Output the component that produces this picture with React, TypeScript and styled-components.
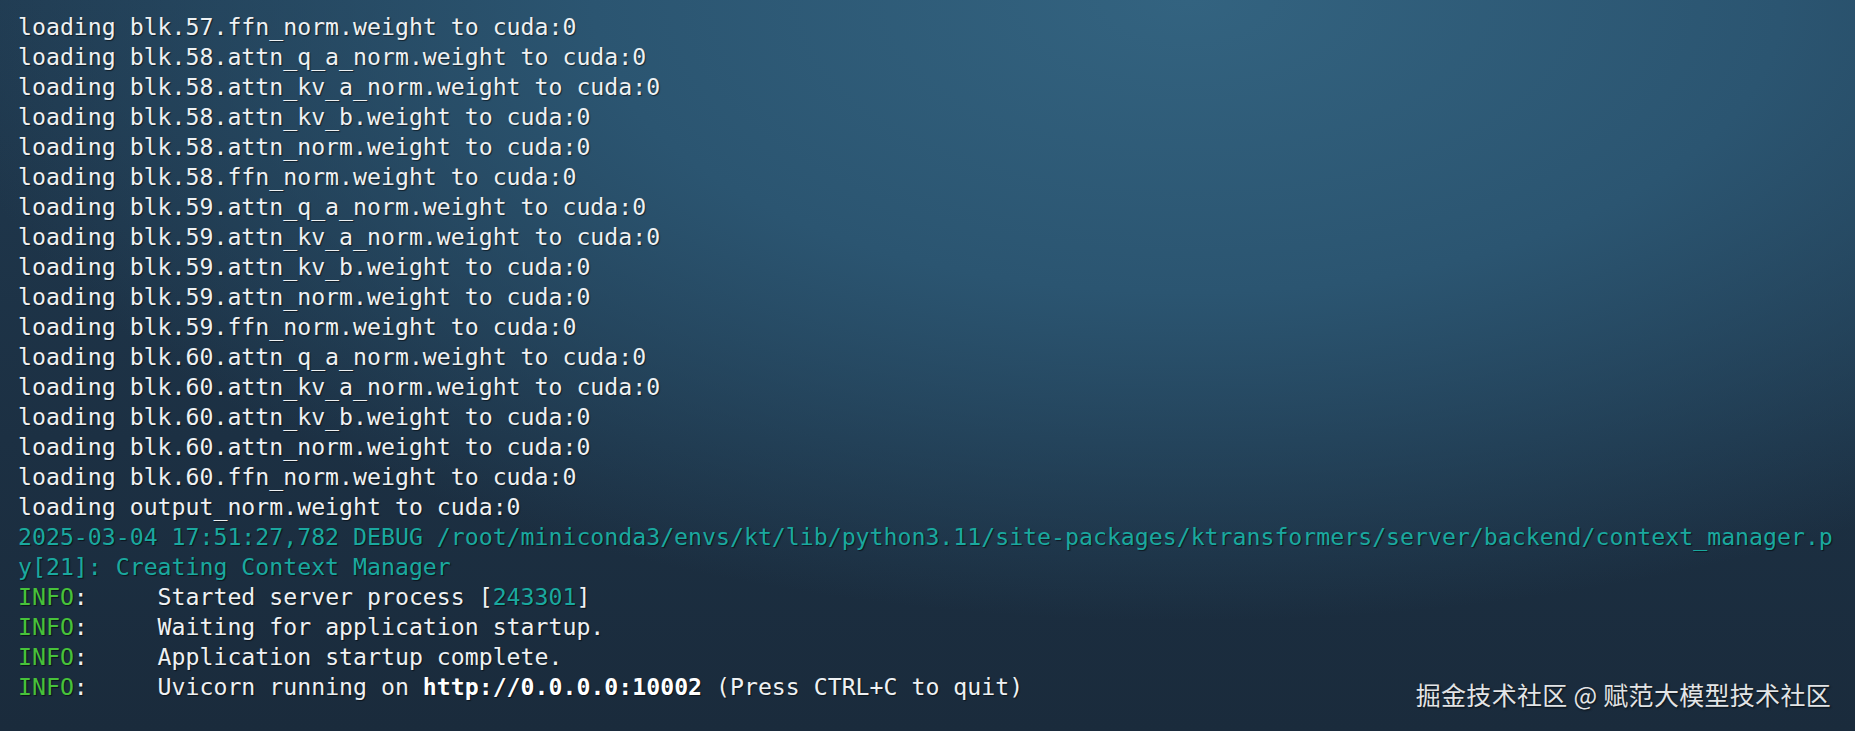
import React from "react";
import styled, { createGlobalStyle } from "styled-components";

type Tone = "plain" | "teal" | "green" | "bold";
type Segment = { text: string; tone?: Tone };

const GlobalStyle = createGlobalStyle`
	html, body {
		margin: 0;
		padding: 0;
		height: 100%;
		background: #1c2d3e;
	}
	#root {
		height: 100%;
	}
`;

const loadLines = [
	"blk.57.ffn_norm.weight",
	"blk.58.attn_q_a_norm.weight",
	"blk.58.attn_kv_a_norm.weight",
	"blk.58.attn_kv_b.weight",
	"blk.58.attn_norm.weight",
	"blk.58.ffn_norm.weight",
	"blk.59.attn_q_a_norm.weight",
	"blk.59.attn_kv_a_norm.weight",
	"blk.59.attn_kv_b.weight",
	"blk.59.attn_norm.weight",
	"blk.59.ffn_norm.weight",
	"blk.60.attn_q_a_norm.weight",
	"blk.60.attn_kv_a_norm.weight",
	"blk.60.attn_kv_b.weight",
	"blk.60.attn_norm.weight",
	"blk.60.ffn_norm.weight",
	"output_norm.weight",
];

const info = (rest: Segment[]): Segment[] => [
	{ text: "INFO", tone: "green" },
	{ text: ":     " },
	...rest,
];

const lines: Segment[][] = [
	...loadLines.map((name) => [{ text: `loading ${name} to cuda:0` }]),
	[
		{
			text: "2025-03-04 17:51:27,782 DEBUG /root/miniconda3/envs/kt/lib/python3.11/site-packages/ktransformers/server/backend/context_manager.p",
			tone: "teal",
		},
	],
	[{ text: "y[21]: Creating Context Manager", tone: "teal" }],
	info([{ text: "Started server process [" }, { text: "243301", tone: "teal" }, { text: "]" }]),
	info([{ text: "Waiting for application startup." }]),
	info([{ text: "Application startup complete." }]),
	info([
		{ text: "Uvicorn running on " },
		{ text: "http://0.0.0.0:10002", tone: "bold" },
		{ text: " (Press CTRL+C to quit)" },
	]),
];

export default function App() {
	return (
		<>
			<GlobalStyle />
			<Screen>
				<Output>
					{lines.map((segments, i) => (
						<Line key={i}>
							{segments.map((seg, j) => (
								<Span key={j} $tone={seg.tone ?? "plain"}>
									{seg.text}
								</Span>
							))}
						</Line>
					))}
				</Output>
				<Watermark>掘金技术社区 @ 赋范大模型技术社区</Watermark>
			</Screen>
		</>
	);
}

const toneColor: Record<Tone, string> = {
	plain: "#eef1f3",
	teal: "#1aa89f",
	green: "#47c23a",
	bold: "#ffffff",
};

const Screen = styled.div`
	position: relative;
	height: 100%;
	overflow: hidden;
	background:
		radial-gradient(ellipse 80% 100% at 64% 0%, #336380 0%, #2b5571 40%, rgba(35, 66, 89, 0) 85%),
		linear-gradient(180deg, #203a50 0%, #1c3043 60%, #1a2b3c 100%);
`;

const Output = styled.div`
	padding: 12px 0 0 18px;
	font-family: "DejaVu Sans Mono", "Liberation Mono", monospace;
	font-size: 23.2px;
	line-height: 30px;
`;

const Line = styled.div`
	white-space: pre;
	height: 30px;
`;

const Span = styled.span<{ $tone: Tone }>`
	color: ${({ $tone }) => toneColor[$tone]};
	font-weight: ${({ $tone }) => ($tone === "bold" ? 700 : 400)};
	text-shadow: 1px 1px 1px rgba(0, 0, 0, 0.55);
`;

const Watermark = styled.div`
	position: absolute;
	right: 24px;
	bottom: 19px;
	font-family: "Noto Sans CJK SC", "Noto Sans", sans-serif;
	font-size: 25px;
	letter-spacing: 0.3px;
	color: #e2e4e6;
	text-shadow: 1px 1px 2px rgba(0, 0, 0, 0.7);
`;
